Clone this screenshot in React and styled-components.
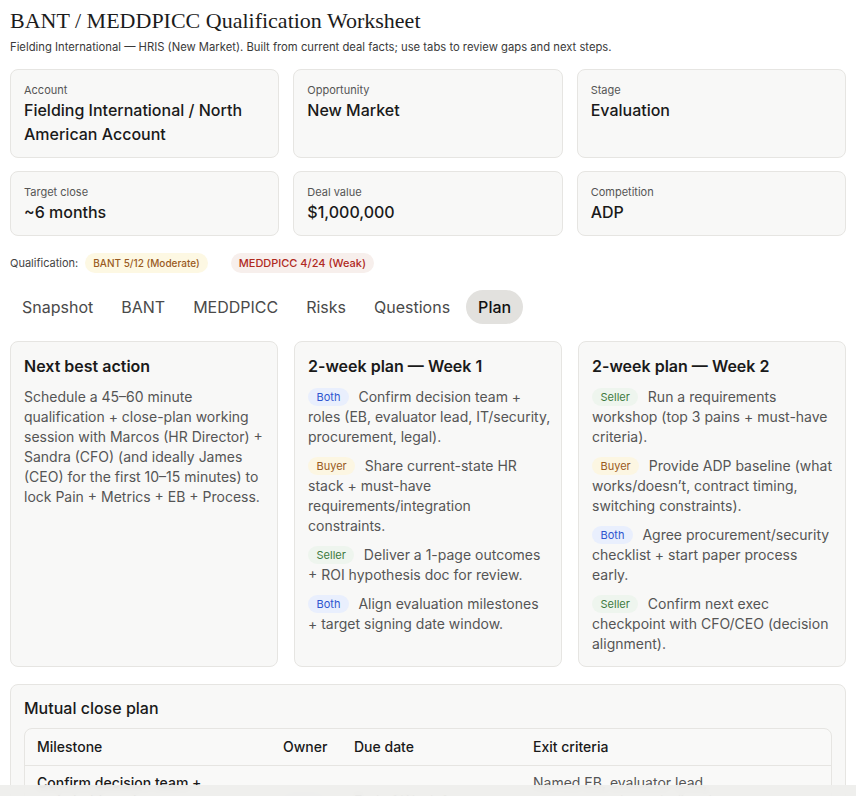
import React, { useState } from "react";
import styled, { createGlobalStyle } from "styled-components";

const GlobalStyle = createGlobalStyle`
  body {
    margin: 0;
    background: #ffffff;
    font-family: Inter, "Noto Sans", sans-serif;
    color: #1a1a1a;
  }
`;

const Page = styled.div`
  padding: 6px 10px 40px 10px;
`;

const Title = styled.h1`
  margin: 0;
  font-family: "Liberation Serif", "DejaVu Serif", serif;
  font-weight: 400;
  font-size: 22px;
  line-height: 30px;
  color: #1c1c1c;
`;

const Subtitle = styled.p`
  margin: 3px 0 0 0;
  font-size: 11.25px;
  line-height: 16px;
  color: #3a3a3a;
`;

const FactGrid = styled.div`
  display: grid;
  grid-template-columns: repeat(3, 1fr);
  gap: 13px 14px;
  margin-top: 14px;
`;

const FactCard = styled.div`
  background: #f8f8f7;
  border: 1px solid #e6e5e2;
  border-radius: 8px;
  padding: 13px 13px 11px 13px;
  min-height: ${(p) => p.$minHeight || 0}px;
  box-sizing: border-box;
`;

const FactLabel = styled.div`
  font-size: 11px;
  line-height: 14px;
  color: #555;
`;

const FactValue = styled.div`
  margin-top: 1px;
  font-size: 16px;
  line-height: 24px;
  font-weight: 500;
  color: #1a1a1a;
`;

const QualRow = styled.div`
  display: flex;
  align-items: center;
  gap: 7px;
  margin-top: 17px;
  font-size: 11px;
  color: #444;
`;

const Pill = styled.span`
  display: inline-block;
  padding: 3px 8px;
  margin-left: ${(p) => p.$gap || 0}px;
  border-radius: 10px;
  font-size: ${(p) => p.$size || 10}px;
  font-weight: 500;
  line-height: 14px;
  background: ${(p) => p.$bg};
  color: ${(p) => p.$fg};
`;

const Tabs = styled.div`
  display: flex;
  gap: 4px;
  margin-top: 17px;
`;

const Tab = styled.button`
  border: none;
  font-family: Inter, "Noto Sans", sans-serif;
  font-size: 16px;
  line-height: 20px;
  padding: 7px 12px;
  border-radius: 17px;
  cursor: pointer;
  background: ${(p) => (p.$active ? "#e2e1de" : "transparent")};
  color: ${(p) => (p.$active ? "#111" : "#4a4a4a")};
  font-weight: ${(p) => (p.$active ? 500 : 400)};
`;

const PlanGrid = styled.div`
  display: grid;
  grid-template-columns: repeat(3, 1fr);
  gap: 16px;
  margin-top: 17px;
`;

const Card = styled.div`
  background: #f8f8f7;
  border: 1px solid #e6e5e2;
  border-radius: 8px;
  padding: 13px 10px 12px 13px;
  min-height: 324px;
  box-sizing: border-box;
`;

const CardTitle = styled.h3`
  margin: 0 0 10px 0;
  font-size: 16px;
  line-height: 22px;
  font-weight: 600;
  color: #1a1a1a;
`;

const BodyText = styled.p`
  margin: 0;
  font-size: 14px;
  line-height: 20px;
  color: #555;
`;

const Item = styled.div`
  font-size: 14px;
  line-height: 20px;
  color: #555;
  margin-bottom: 9px;

  &:last-child {
    margin-bottom: 0;
  }
`;

const Who = styled.span`
  display: inline-block;
  padding: 0 8.5px;
  margin-right: 9.5px;
  border-radius: 9px;
  font-size: 11px;
  line-height: 18px;
  vertical-align: 1px;
  background: ${(p) => p.$bg};
  color: ${(p) => p.$fg};
`;

const WideCard = styled.div`
  margin-top: 17px;
  background: #f8f8f7;
  border: 1px solid #e6e5e2;
  border-radius: 8px;
  padding: 12px 13px 16px 13px;
`;

const WideTitle = styled.h3`
  margin: 0 0 9px 0;
  font-size: 16px;
  line-height: 22px;
  font-weight: 500;
  color: #1a1a1a;
`;

const TableWrap = styled.div`
  border: 1px solid #e6e5e2;
  border-radius: 8px;
  background: #f9f9f8;
  overflow: hidden;
`;

const Table = styled.table`
  width: 100%;
  border-collapse: collapse;
  table-layout: fixed;
  font-size: 14px;
`;

const Th = styled.th`
  text-align: left;
  font-weight: 500;
  color: #1a1a1a;
  padding: 10px 12px;
  line-height: 16px;
  border-bottom: 1px solid #e6e5e2;
`;

const Td = styled.td`
  padding: 8px 12px;
  line-height: 18px;
  color: ${(p) => (p.$strong ? "#1a1a1a" : "#555")};
  font-weight: ${(p) => (p.$strong ? 500 : 400)};
  vertical-align: ${(p) => (p.$mid ? "middle" : "top")};
`;

const BottomFade = styled.div`
  position: fixed;
  left: 0;
  right: 0;
  bottom: 0;
  height: 11px;
  background: rgba(238, 238, 236, 0.92);
  backdrop-filter: blur(3px);
`;

const facts = [
  { label: "Account", value: "Fielding International / North American Account" },
  { label: "Opportunity", value: "New Market" },
  { label: "Stage", value: "Evaluation" },
  { label: "Target close", value: "~6 months" },
  { label: "Deal value", value: "$1,000,000" },
  { label: "Competition", value: "ADP" },
];

const whoColors = {
  Both: { bg: "#e9effd", fg: "#2f56cf" },
  Buyer: { bg: "#fcf6e2", fg: "#995a1d" },
  Seller: { bg: "#eef5ee", fg: "#3d7a3f" },
};

const week1 = [
  { who: "Both", text: "Confirm decision team + roles (EB, evaluator lead, IT/security, procurement, legal)." },
  { who: "Buyer", text: "Share current-state HR stack + must-have requirements/integration constraints." },
  { who: "Seller", text: "Deliver a 1-page outcomes + ROI hypothesis doc for review." },
  { who: "Both", text: "Align evaluation milestones + target signing date window." },
];

const week2 = [
  { who: "Seller", text: "Run a requirements workshop (top 3 pains + must-have criteria)." },
  { who: "Buyer", text: "Provide ADP baseline (what works/doesn’t, contract timing, switching constraints)." },
  { who: "Both", text: "Agree procurement/security checklist + start paper process early." },
  { who: "Seller", text: "Confirm next exec checkpoint with CFO/CEO (decision alignment)." },
];

const tabs = ["Snapshot", "BANT", "MEDDPICC", "Risks", "Questions", "Plan"];

function PlanList({ items }) {
  return items.map((it, i) => (
    <Item key={i}>
      <Who $bg={whoColors[it.who].bg} $fg={whoColors[it.who].fg}>
        {it.who}
      </Who>
      {it.text}
    </Item>
  ));
}

export default function App() {
  const [tab, setTab] = useState("Plan");

  return (
    <Page>
      <GlobalStyle />
      <Title>BANT / MEDDPICC Qualification Worksheet</Title>
      <Subtitle>
        Fielding International — HRIS (New Market). Built from current deal facts; use tabs to review gaps and next steps.
      </Subtitle>

      <FactGrid>
        {facts.map((f, i) => (
          <FactCard key={f.label} $minHeight={i < 3 ? 89 : 65}>
            <FactLabel>{f.label}</FactLabel>
            <FactValue>{f.value}</FactValue>
          </FactCard>
        ))}
      </FactGrid>

      <QualRow>
        <span>Qualification:</span>
        <Pill $bg="#fdf8e3" $fg="#9a5b1f">BANT 5/12 (Moderate)</Pill>
        <Pill $bg="#f7efec" $fg="#b02a1e" $size={11} $gap={16}>
          MEDDPICC 4/24 (Weak)
        </Pill>
      </QualRow>

      <Tabs>
        {tabs.map((t) => (
          <Tab key={t} $active={tab === t} onClick={() => setTab(t)}>
            {t}
          </Tab>
        ))}
      </Tabs>

      <PlanGrid>
        <Card>
          <CardTitle>Next best action</CardTitle>
          <BodyText>
            Schedule a 45–60 minute qualification + close-plan working session with Marcos (HR Director) + Sandra (CFO) (and ideally James (CEO) for the first 10–15 minutes) to lock Pain + Metrics + EB + Process.
          </BodyText>
        </Card>
        <Card>
          <CardTitle>2-week plan — Week 1</CardTitle>
          <PlanList items={week1} />
        </Card>
        <Card>
          <CardTitle>2-week plan — Week 2</CardTitle>
          <PlanList items={week2} />
        </Card>
      </PlanGrid>

      <WideCard>
        <WideTitle>Mutual close plan</WideTitle>
        <TableWrap>
          <Table>
            <colgroup>
              <col style={{ width: 246 }} />
              <col style={{ width: 71 }} />
              <col style={{ width: 179 }} />
              <col />
            </colgroup>
            <thead>
              <tr>
                <Th>Milestone</Th>
                <Th>Owner</Th>
                <Th>Due date</Th>
                <Th>Exit criteria</Th>
              </tr>
            </thead>
            <tbody>
              <tr>
                <Td $strong>Confirm decision team + stakeholder roles</Td>
                <Td $mid>
                  <Who $bg={whoColors.Both.bg} $fg={whoColors.Both.fg}>Both</Who>
                </Td>
                <Td $mid>End of Week 1</Td>
                <Td>Named EB, evaluator lead, procurement/security/legal owners confirmed</Td>
              </tr>
            </tbody>
          </Table>
        </TableWrap>
      </WideCard>
      <BottomFade />
    </Page>
  );
}
